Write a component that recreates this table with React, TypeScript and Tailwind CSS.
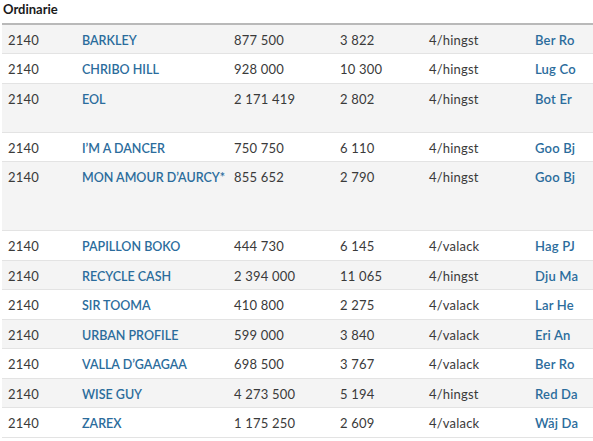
import React from 'react';

type Row = {
  id: string;
  name: string;
  price: string;
  count: string;
  kind: string;
  owner: string;
  tall?: string;
};

const rows: Row[] = [
  { id: '2140', name: 'BARKLEY', price: '877 500', count: '3 822', kind: '4/hingst', owner: 'Ber Ro' },
  { id: '2140', name: 'CHRIBO HILL', price: '928 000', count: '10 300', kind: '4/hingst', owner: 'Lug Co' },
  { id: '2140', name: 'EOL', price: '2 171 419', count: '2 802', kind: '4/hingst', owner: 'Bot Er', tall: 'h-[49px]' },
  { id: '2140', name: 'I\u2019M A DANCER', price: '750 750', count: '6 110', kind: '4/hingst', owner: 'Goo Bj' },
  { id: '2140', name: 'MON AMOUR D\u2019AURCY*', price: '855 652', count: '2 790', kind: '4/hingst', owner: 'Goo Bj', tall: 'h-[69px]' },
  { id: '2140', name: 'PAPILLON BOKO', price: '444 730', count: '6 145', kind: '4/valack', owner: 'Hag PJ' },
  { id: '2140', name: 'RECYCLE CASH', price: '2 394 000', count: '11 065', kind: '4/hingst', owner: 'Dju Ma' },
  { id: '2140', name: 'SIR TOOMA', price: '410 800', count: '2 275', kind: '4/valack', owner: 'Lar He' },
  { id: '2140', name: 'URBAN PROFILE', price: '599 000', count: '3 840', kind: '4/valack', owner: 'Eri An' },
  { id: '2140', name: 'VALLA D\u2019GAAGAA', price: '698 500', count: '3 767', kind: '4/valack', owner: 'Ber Ro' },
  { id: '2140', name: 'WISE GUY', price: '4 273 500', count: '5 194', kind: '4/hingst', owner: 'Red Da' },
  { id: '2140', name: 'ZAREX', price: '1 175 250', count: '2 609', kind: '4/valack', owner: 'Wäj Da' },
];

const App = () => {
  return (
    <div className="min-h-screen bg-white pl-[2px] font-['Lato','Noto_Sans',sans-serif] text-[13px] text-[#3a3a3a]">
      <h2 className="h-[23px] pl-[1px] pt-[1px] text-[13px] font-bold leading-[16px] text-[#1a1a1a]">Ordinarie</h2>
      <table className="w-full border-collapse border-t-2 border-[#b9b9b9] leading-[18px] tracking-[0.2px]">
        <tbody>
          {rows.map((r, i) => (
            <tr
              key={r.name}
              className={`${r.tall ?? 'h-[29.5px]'} border-b border-[#e3e3e3] align-top whitespace-nowrap ${
                i % 2 === 0 ? 'bg-[#f4f4f4]' : 'bg-white'
              }`}
            >
              <td className="w-[80px] pl-[6px] pt-[6px]">{r.id}</td>
              <td className="w-[152px] pt-[7px] text-[12.5px] leading-[18px] font-semibold tracking-normal text-[#2b6c9c]">{r.name}</td>
              <td className="w-[106px] pt-[6px]">{r.price}</td>
              <td className="w-[89px] pt-[6px]">{r.count}</td>
              <td className="w-[106px] pt-[6px]">{r.kind}</td>
              <td className="pt-[6px] font-semibold text-[#2b6c9c]">{r.owner}</td>
            </tr>
          ))}
        </tbody>
      </table>
    </div>
  );
};

export default App;
